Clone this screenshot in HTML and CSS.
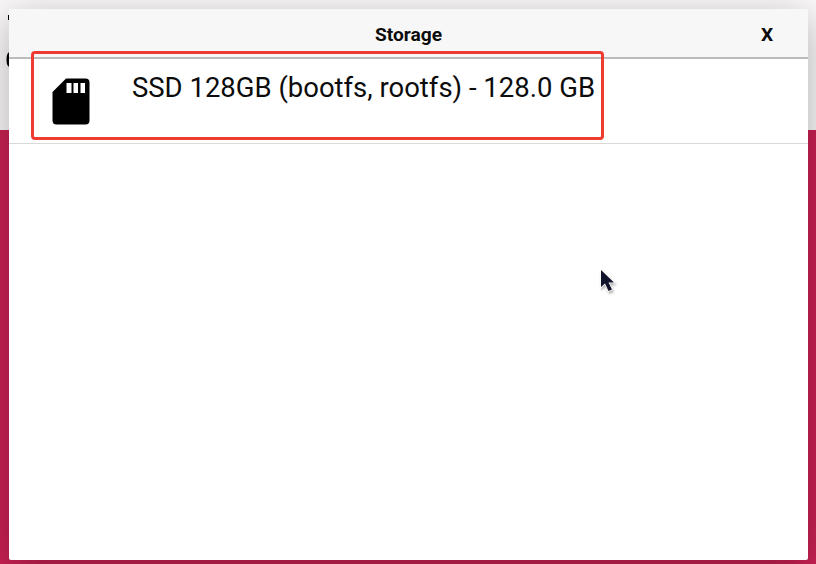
FILE: index.html
```html
<!DOCTYPE html>
<html lang="en">
<head>
<meta charset="utf-8">
<title>Storage</title>
<link rel="stylesheet" href="styles.css">
</head>
<body>
<div class="backdrop">
  <div class="backdrop-top"></div>
  <svg class="backdrop-marks" width="12" height="80" viewBox="0 0 12 80"><path d="M8 15h3v5H8zM10 52Q6.500 52 6.500 59.500T10 67z"/></svg>
</div>
<main class="dialog">
  <header class="dialog-header">
    <span></span>
    <h1 class="title">Storage</h1>
    <button class="close">X</button>
  </header>
  <div class="device">
    <svg class="card-icon" width="38" height="48" viewBox="0 0 38 48">
      <path fill-rule="evenodd" d="M14 .5H33.500Q37.500 .5 37.500 4.500V42.500Q37.500 46.500 33.500 46.500H4.500Q.5 46.500 .5 42.500V14ZM14.500 5V15H19.500V5ZM21.500 5V15H26V5ZM28.500 5V15H33V5Z"/>
    </svg>
    <span class="device-name">SSD 128GB (bootfs, rootfs) - 128.0 GB</span>
    <div class="highlight"></div>
  </div>
</main>
<svg class="cursor" width="22" height="28" viewBox="0 0 22 28"><path d="M2 2V19L6 15.500 9.500 23 13 21.500 9.500 14.500H15Z"/></svg>
</body>
</html>
```
FILE: styles.css
```css
* { box-sizing: border-box; }
body {
  margin: 0;
  width: 816px;
  height: 564px;
  padding: 9px 8px 4px 9px;
  overflow: hidden;
  position: relative;
  font-family: Roboto, sans-serif;
  color: #0c0c0c;
}
.backdrop {
  position: absolute;
  inset: 0;
  background: #ca2152;
}
.backdrop-top {
  height: 130px;
  background: #faf8f9;
}
.backdrop-marks { position: absolute; left: 0; top: 0; }
.dialog {
  position: relative;
  height: 551px;
  background: #fff;
  border-radius: 0 0 2px 2px;
  box-shadow: 0 10px 40px rgba(0, 0, 0, .3);
}
.dialog-header {
  display: grid;
  grid-template-columns: 82px 1fr 82px;
  align-items: center;
  height: 50px;
  background: #f7f7f7;
  border-bottom: 2px solid #bcbcbc;
}
.title {
  margin: 0;
  padding-top: 3px;
  text-align: center;
  font-size: 19.200px;
  line-height: 24px;
  font-weight: 700;
}
.close {
  border: 0;
  padding: 3px 0 0;
  background: none;
  color: inherit;
  font: 700 19.200px/24px Roboto, sans-serif;
}
.device {
  position: relative;
  display: flex;
  align-items: flex-start;
  height: 85px;
  padding: 19px 0 0 43px;
  border-bottom: 1px solid #d9d9d9;
}
.card-icon { flex: none; }
.device-name {
  margin: -7px 0 0 42px;
  font-size: 27.480px;
  line-height: 34px;
  white-space: nowrap;
}
.highlight {
  position: absolute;
  left: 22px;
  top: -8px;
  width: 573px;
  height: 89px;
  border: 3px solid #ee3c33;
  border-radius: 4px;
}
.cursor {
  position: absolute;
  left: 599px;
  top: 268px;
  fill: #101329;
  stroke: #fff;
  stroke-width: 1.500px;
  paint-order: stroke;
  filter: drop-shadow(1px 2px 1px rgba(0, 0, 0, .3));
}
```
